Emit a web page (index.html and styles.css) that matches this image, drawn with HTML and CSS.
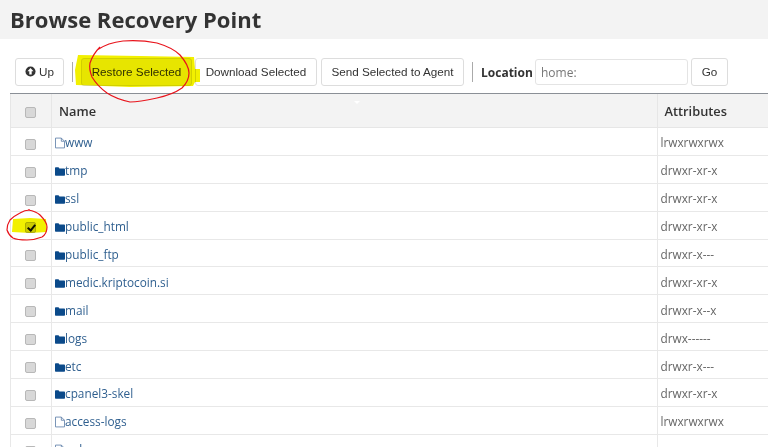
FILE: index.html
```html
<!DOCTYPE html>
<html lang="en">
<head>
<meta charset="utf-8">
<title>Browse Recovery Point</title>
<link rel="stylesheet" href="styles.css">
</head>
<body>
<svg width="0" height="0" class="defs">
  <symbol id="folder" viewBox="0 0 12 10"><path d="M0 1.200C0 .5.5 0 1.200 0h2.600c.6 0 1 .3 1.200.9l.2.5h5.600c.7 0 1.200.5 1.200 1.200v6.200c0 .7-.5 1.200-1.200 1.200H1.200C.5 10 0 9.500 0 8.800z" fill="#0b4a8a"/></symbol>
  <symbol id="file" viewBox="0 0 12 13"><path d="M.6.6h7l3.800 3.800v8H.6zM7.600.6v3.800h3.800" fill="#fff" stroke="#5f7fa8" stroke-width="1"/></symbol>
</svg>
<header class="page-head"><h1>Browse Recovery Point</h1></header>
<div class="toolbar">
  <button class="btn btn-up"><svg class="up-icon" viewBox="0 0 12 12" width="11" height="11"><circle cx="6" cy="6" r="5.500" fill="#333"/><path d="M6 2.300 9.300 5.800H7.300V9.300H4.700V5.800H2.700z" fill="#fff"/></svg>Up</button>
  <span class="sep sep-a"></span>
  <button class="btn btn-restore">Restore Selected</button>
  <button class="btn btn-download">Download Selected</button>
  <button class="btn btn-send">Send Selected to Agent</button>
  <span class="sep sep-b"></span>
  <label class="loc-label" for="loc">Location</label>
  <input id="loc" class="loc-input" placeholder="home:">
  <button class="btn btn-go">Go</button>
</div>
<table class="files">
  <colgroup><col class="c-check"><col class="c-name"><col class="c-attr"></colgroup>
  <thead>
    <tr><th><span class="box"></span></th><th>Name</th><th>Attributes</th></tr>
  </thead>
  <tbody>
    <tr><td><span class="box"></span></td><td><svg class="ic ic-file"><use href="#file"/></svg><a>www</a></td><td>lrwxrwxrwx</td></tr>
    <tr><td><span class="box"></span></td><td><svg class="ic"><use href="#folder"/></svg><a>tmp</a></td><td>drwxr-xr-x</td></tr>
    <tr><td><span class="box"></span></td><td><svg class="ic"><use href="#folder"/></svg><a>ssl</a></td><td>drwxr-xr-x</td></tr>
    <tr><td><span class="box checked"></span></td><td><svg class="ic"><use href="#folder"/></svg><a>public_html</a></td><td>drwxr-xr-x</td></tr>
    <tr><td><span class="box"></span></td><td><svg class="ic"><use href="#folder"/></svg><a>public_ftp</a></td><td>drwxr-x---</td></tr>
    <tr><td><span class="box"></span></td><td><svg class="ic"><use href="#folder"/></svg><a>medic.kriptocoin.si</a></td><td>drwxr-xr-x</td></tr>
    <tr><td><span class="box"></span></td><td><svg class="ic"><use href="#folder"/></svg><a>mail</a></td><td>drwxr-x--x</td></tr>
    <tr><td><span class="box"></span></td><td><svg class="ic"><use href="#folder"/></svg><a>logs</a></td><td>drwx------</td></tr>
    <tr><td><span class="box"></span></td><td><svg class="ic"><use href="#folder"/></svg><a>etc</a></td><td>drwxr-x---</td></tr>
    <tr><td><span class="box"></span></td><td><svg class="ic"><use href="#folder"/></svg><a>cpanel3-skel</a></td><td>drwxr-xr-x</td></tr>
    <tr><td><span class="box"></span></td><td><svg class="ic ic-file"><use href="#file"/></svg><a>access-logs</a></td><td>lrwxrwxrwx</td></tr>
    <tr><td><span class="box"></span></td><td><svg class="ic ic-file"><use href="#file"/></svg><a>.ssh</a></td><td></td></tr>
  </tbody>
</table>
<span class="sort-mark"></span>
<svg class="scribble" viewBox="0 0 768 447" width="768" height="447" aria-hidden="true">
  <path class="marker" d="M78 55 L140 56 L194 57 L195 69 L200 69 L200 82 L195 82 L193 86 L130 87 L76 85 L75 70z"/>
  <path class="marker" d="M13 219 L30 218 L46 219 L47 232 L30 233 L12 232z"/>
  <path class="pen" d="M97 50C106 44 114 42 123 41C135 40 147 41 157 43C167 46 175 50 180 55C186 62 189 67 189 73C189 79 186 84 182 88C175 93 166 96 157 98C148 100 139 102 130 102C121 100 113 97 107 93C100 88 95 82 92 77C90 72 89 68 90 63C92 57 95 52 100 47"/>
  <path class="pen" d="M28 210C34 211 37 212 40 215C44 219 47 223 47 227C47 231 45 235 42 237C37 239 32 240 27 240C22 240 17 240 13 238C10 236 8 233 7 230C7 226 8 223 10 220C13 217 16 215 20 213C23 211 27 210 30 210"/>
</svg>
</body>
</html>
```
FILE: styles.css
```css
* { box-sizing: border-box; }
html, body { margin: 0; height: 447px; overflow: hidden; background: #fff; }
body { position: relative; font-family: "Open Sans", "Liberation Sans", sans-serif; color: #333; }
.defs { position: absolute; }

.page-head { height: 39px; background: #f3f3f3; padding-left: 10px; }
.page-head h1 { margin: 0; font-size: 22px; line-height: 39px; font-weight: 700; color: #333; }

.toolbar { display: flex; align-items: center; height: 28px; margin-top: 19px; padding-left: 15px; }
.btn { height: 28px; padding: 0 0 2px; background: #fff; border: 1px solid #ddd; border-radius: 3px; font: 11.7px "Liberation Sans", sans-serif; color: #333; display: inline-flex; align-items: center; justify-content: center; }
.btn-up { width: 49px; }
.up-icon { margin-right: 3px; }
.btn-restore { width: 111px; background: #f4f4f4; }
.btn-download { width: 122px; margin-left: 3px; }
.btn-send { width: 143px; margin-left: 4px; }
.btn-go { width: 37px; margin-left: 3px; }
.sep { width: 1px; height: 20px; background: #aaa; }
.sep-a { margin: 0 8px; }
.sep-b { margin: 0 8px; }
.loc-label { font-size: 12px; font-weight: 700; width: 49px; white-space: nowrap; margin-right: 5px; }
.loc-input { width: 153px; height: 26px; padding: 0 5px; border: 1px solid #e4e4e4; border-radius: 3px; font: 12px "Open Sans", sans-serif; color: #555; }
.loc-input::placeholder { color: #777; opacity: 1; }

.files { table-layout: fixed; border-collapse: collapse; width: 758px; margin: 7px 0 0 10px; font-size: 11.8px; }
.c-check { width: 41px; }
.c-attr { width: 111px; }
.files th { height: 34px; background: #f3f3f3; border-top: 1px solid #8a8f96; border-bottom: 1px solid #e6e6e6; border-left: 1px solid #e6e6e6; text-align: left; padding: 0 7px; font-size: 12.8px; font-weight: 600; }
.files td { height: 27.9px; border-bottom: 1px solid #e8e8e8; border-left: 1px solid #e8e8e8; padding: 2px 3px 0; color: #666; white-space: nowrap; }
.files th:first-child, .files td:first-child { text-align: center; padding-left: 0; padding-right: 2px; }
.files a { color: #2f5f8f; }
.box { display: inline-block; width: 11px; height: 11px; background: #d8d8d8; border: 1px solid #b8b8b8; border-radius: 2px; vertical-align: middle; }
.box.checked { position: relative; }
.box.checked::after { content: ""; position: absolute; left: 3px; top: 0; width: 3px; height: 6px; border: solid #111; border-width: 0 2px 2px 0; transform: rotate(40deg); }
.ic { width: 10px; height: 9px; vertical-align: -1px; }
.ic-file { height: 12px; vertical-align: -2px; }

.sort-mark { position: absolute; left: 354px; top: 101px; border: 3px solid transparent; border-top-color: #fff; border-bottom: 0; }
.scribble { position: absolute; left: 0; top: 0; pointer-events: none; }
.marker { fill: #f2f000; mix-blend-mode: multiply; }
.pen { fill: none; stroke: #e8141c; stroke-width: 1.2; }
```
